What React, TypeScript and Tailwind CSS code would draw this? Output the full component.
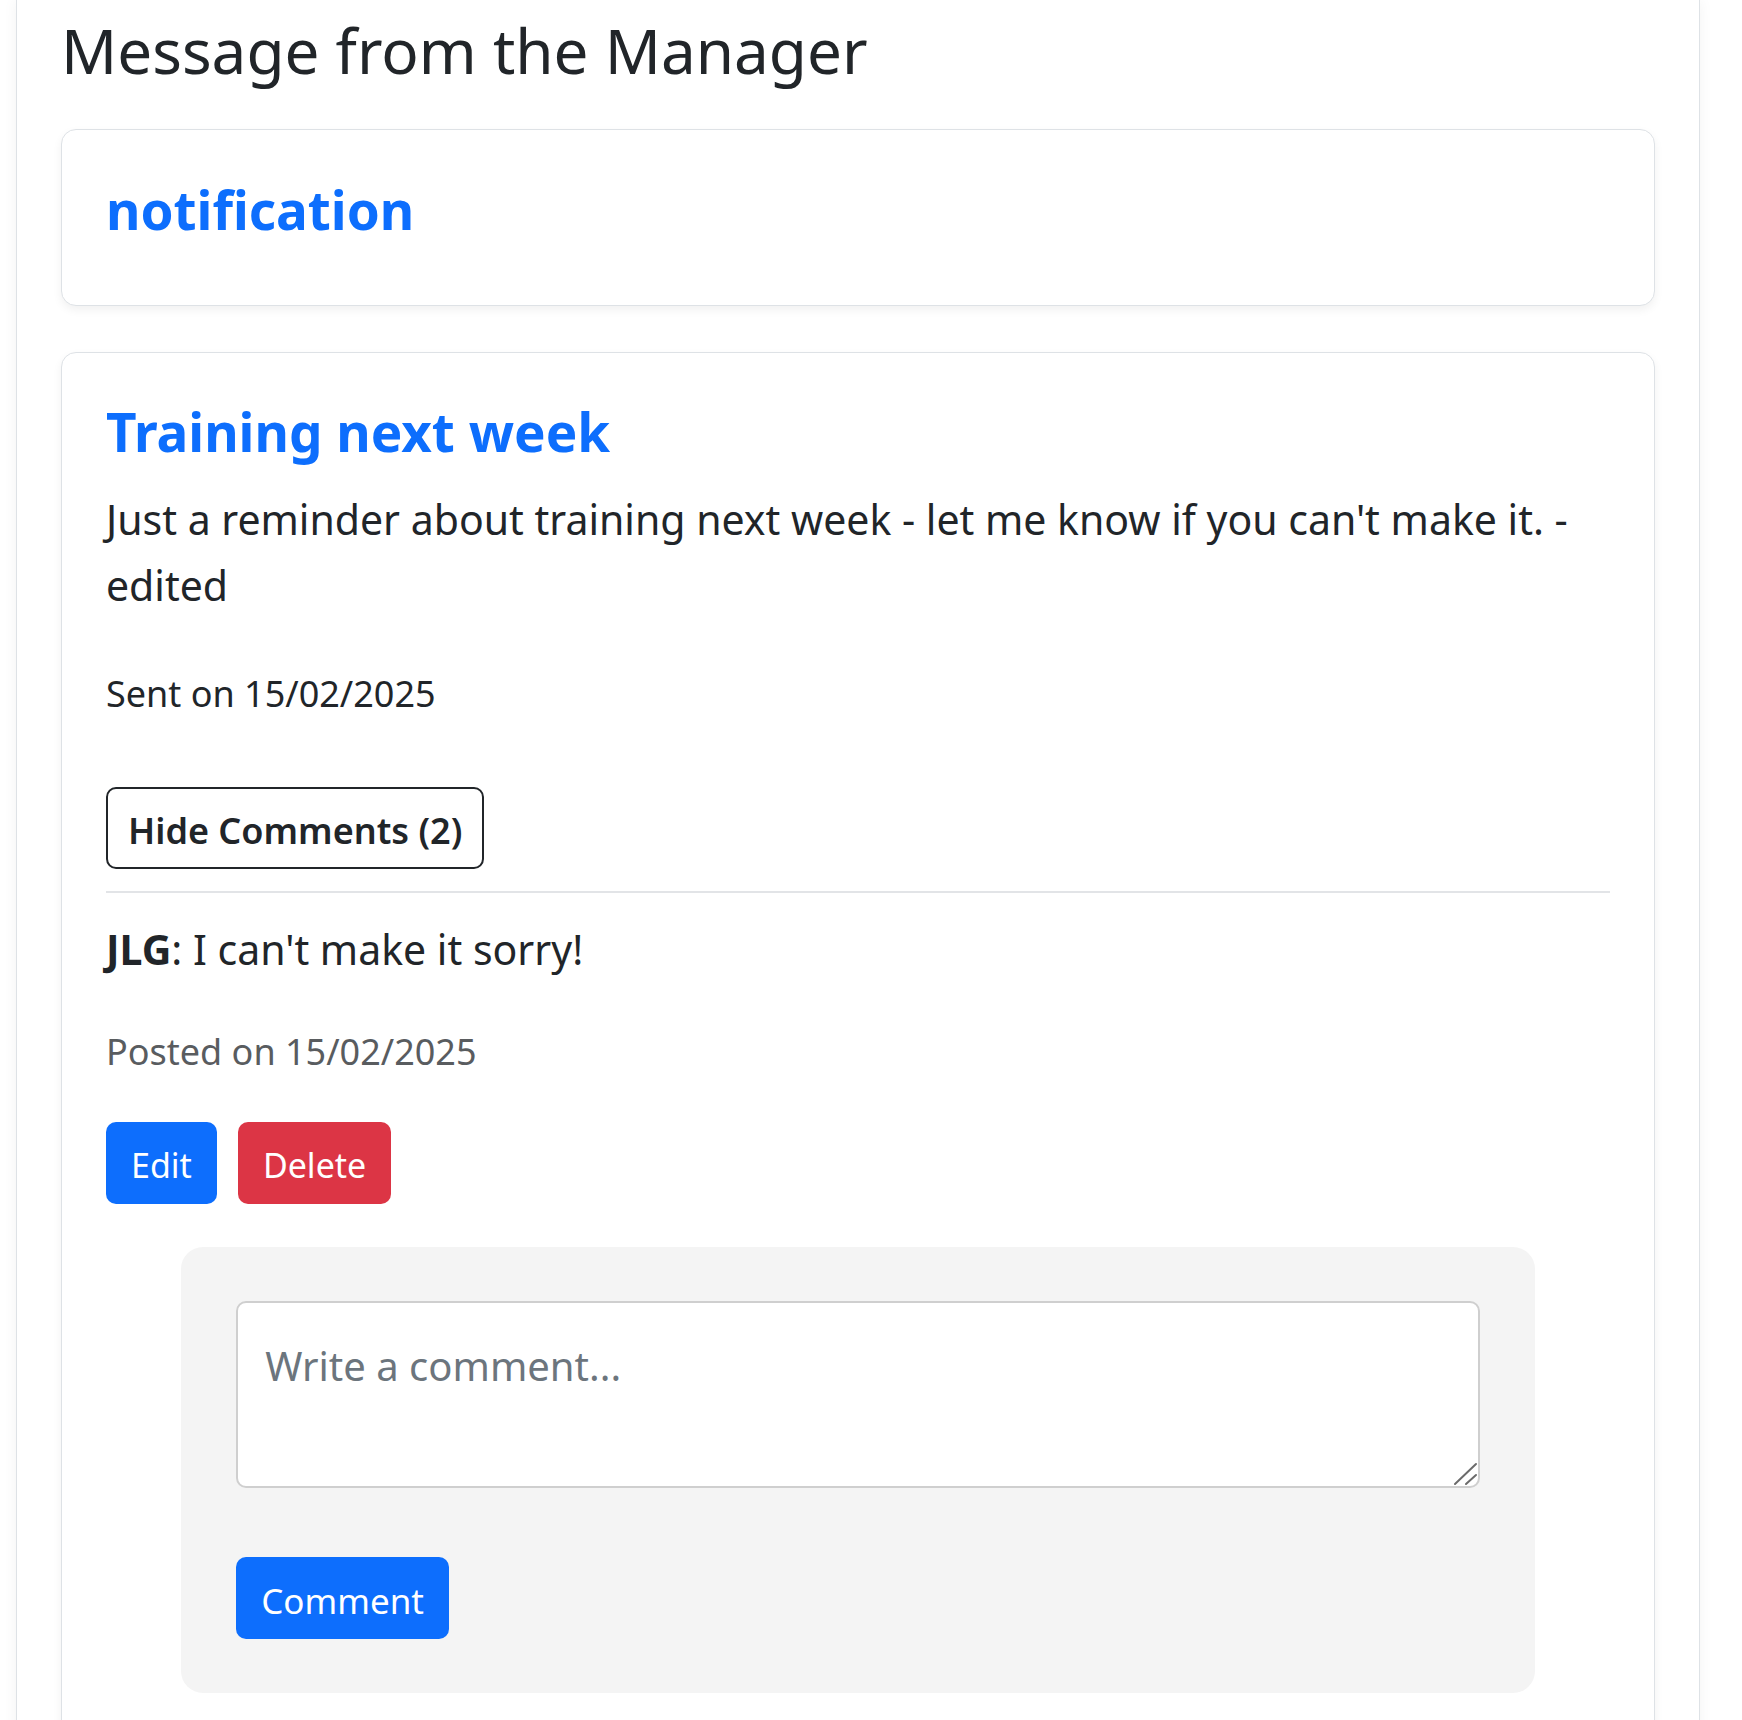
import React from "react";

export default function App() {
  return (
    <div className="min-h-screen bg-white font-['Noto_Sans',sans-serif] text-[#212529]">
      <div className="ml-[16px] w-[1684px] min-h-[1720px] border-x border-[#dee2e6] px-[44px] shadow-[0_0_14px_rgba(0,0,0,0.05)]">
        <h1 className="pt-[13px] mb-[42px] text-[62px] leading-[74px] font-normal">
          Message from the Manager
        </h1>

        <div className="rounded-[15px] border border-[#dee2e6] bg-white px-[44px] pt-[48px] pb-[63px] shadow-[0_4px_10px_rgba(0,0,0,0.06)]">
          <h3 className="text-[53px] leading-[64px] font-bold text-[#0d6efd]">notification</h3>
        </div>

        <div className="mt-[46px] rounded-[15px] border border-[#dee2e6] bg-white px-[44px] pt-[47px] pb-[60px] shadow-[0_4px_10px_rgba(0,0,0,0.06)]">
          <h3 className="text-[53px] leading-[64px] font-bold text-[#0d6efd]">Training next week</h3>
          <p className="mt-[22px] text-[41px] leading-[66px]">
            Just a reminder about training next week - let me know if you can't make it. - edited
          </p>
          <p className="mt-[50px] text-[36px] leading-[51px]">Sent on 15/02/2025</p>

          <button className="mt-[68px] flex h-[82px] items-center rounded-[10px] border-2 border-[#212529] bg-white px-[20px] pt-[5px] text-[36px] leading-[51px] font-semibold text-[#212529]">
            Hide Comments (2)
          </button>

          <div className="mt-[22px] border-t-2 border-[#e2e4e7]" />

          <p className="mt-[27px] text-[41px] leading-[58px]">
            <span className="font-bold">JLG</span>: I can't make it sorry!
          </p>
          <p className="mt-[48px] text-[36px] leading-[51px] text-[#595c5f]">Posted on 15/02/2025</p>

          <div className="mt-[45px] flex gap-[21px]">
            <button className="flex h-[82px] items-center rounded-[10px] bg-[#0d6efd] px-[25px] pt-[4px] text-[34px] leading-[51px] text-white">
              Edit
            </button>
            <button className="flex h-[82px] items-center rounded-[10px] bg-[#dc3545] px-[25px] pt-[4px] text-[34px] leading-[51px] text-white">
              Delete
            </button>
          </div>

          <div className="mx-auto mt-[43px] w-[90%] rounded-[22px] bg-[#f4f4f4] px-[55px] pt-[54px] pb-[54px]">
            <div className="relative">
              <textarea
                className="block h-[187px] w-full resize-none rounded-[10px] border-2 border-[#cfcfcf] bg-white px-[27px] pt-[34px] text-[40px] leading-[57px] text-[#212529] outline-none placeholder:text-[#6c757d]"
                placeholder="Write a comment..."
              />
              <svg
                className="pointer-events-none absolute right-0 bottom-0"
                width="30"
                height="30"
                viewBox="0 0 30 30"
              >
                <line x1="5" y1="26" x2="26" y2="6" stroke="#6b6b6b" strokeWidth="2" strokeLinecap="round" />
                <line x1="16" y1="26" x2="26" y2="17" stroke="#6b6b6b" strokeWidth="2" strokeLinecap="round" />
              </svg>
            </div>
            <button className="mt-[69px] flex h-[82px] items-center rounded-[10px] bg-[#0d6efd] px-[25px] pt-[4px] text-[35px] leading-[51px] text-white">
              Comment
            </button>
          </div>
        </div>
      </div>
    </div>
  );
}
